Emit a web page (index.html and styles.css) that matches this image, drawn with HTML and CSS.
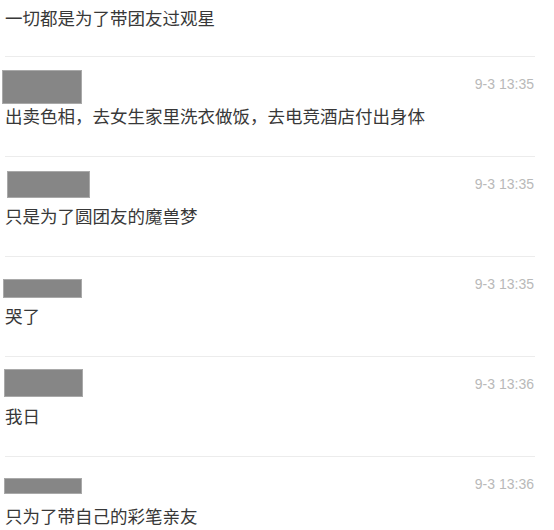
FILE: index.html
```html
<!DOCTYPE html>
<html lang="zh-CN">
<head>
<meta charset="utf-8">
<title>评论</title>
<link rel="stylesheet" href="styles.css">
</head>
<body>
<div class="list">
  <div class="item first">
    <p class="text">一切都是为了带团友过观星</p>
  </div>
  <div class="item">
    <div class="head"><span class="redact r1"></span><span class="time">9-3 13:35</span></div>
    <p class="text">出卖色相，去女生家里洗衣做饭，去电竞酒店付出身体</p>
  </div>
  <div class="item">
    <div class="head"><span class="redact r2"></span><span class="time">9-3 13:35</span></div>
    <p class="text">只是为了圆团友的魔兽梦</p>
  </div>
  <div class="item">
    <div class="head"><span class="redact r3"></span><span class="time">9-3 13:35</span></div>
    <p class="text">哭了</p>
  </div>
  <div class="item">
    <div class="head"><span class="redact r4"></span><span class="time">9-3 13:36</span></div>
    <p class="text">我日</p>
  </div>
  <div class="item last">
    <div class="head"><span class="redact r5"></span><span class="time">9-3 13:36</span></div>
    <p class="text">只为了带自己的彩笔亲友</p>
  </div>
</div>
</body>
</html>
```
FILE: styles.css
```css
html, body {
  margin: 0;
  padding: 0;
  background: #ffffff;
}
.list {
  width: 530px;
  margin-left: 5px;
  font-family: "Noto Sans CJK SC", "Noto Sans", sans-serif;
}
.item {
  position: relative;
  padding: 15px 1px 28px 0;
  border-bottom: 1px solid #ececec;
}
.item.first {
  padding-top: 6px;
  padding-bottom: 26px;
}
.item.last {
  border-bottom: none;
}
.head {
  height: 24px;
  display: flex;
  justify-content: flex-end;
  align-items: center;
  margin-bottom: 8px;
}
.time {
  font-family: "Liberation Sans", Arial, sans-serif;
  font-size: 14px;
  line-height: 24px;
  color: #b9b9b9;
}
.text {
  margin: 0;
  font-size: 17.5px;
  line-height: 24px;
  color: #383838;
  white-space: nowrap;
}
.redact {
  position: absolute;
  background: #868686;
  box-shadow: 0 0 0 1px #a9a9a9 inset;
}
.r1 { top: 13px; left: -3px; width: 80px; height: 34px; }
.r2 { top: 14px; left: 2px; width: 83px; height: 27px; }
.r3 { top: 22px; left: -2px; width: 79px; height: 19px; }
.r4 { top: 12px; left: -1px; width: 79px; height: 28px; }
.r5 { top: 21px; left: -1px; width: 78px; height: 16px; }
```
